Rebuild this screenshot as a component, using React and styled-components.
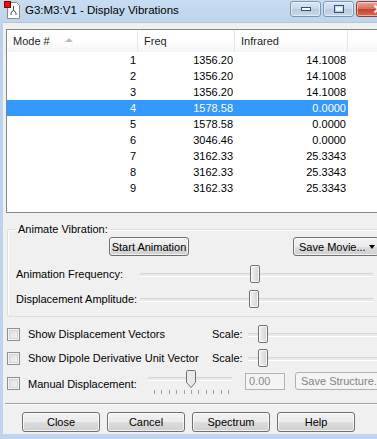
import styled, { createGlobalStyle } from 'styled-components'

const GlobalStyle = createGlobalStyle`
  html, body {
    margin: 0;
    padding: 0;
    width: 377px;
    height: 439px;
    overflow: hidden;
    background: #bfd5ee;
  }
  body {
    font-family: "Liberation Sans", Arial, sans-serif;
    font-size: 11px;
    color: #000;
  }
`

const Window = styled.div`
  width: 404px;
  height: 439px;
  display: flex;
  flex-direction: column;
  background: linear-gradient(#c8dcf1, #bad2ec 30px, #bfd5ee);
`

const TitleBar = styled.div`
  height: 22px;
  flex-shrink: 0;
  display: flex;
  align-items: flex-start;
  padding-left: 2px;
  box-sizing: border-box;
`

const TitleText = styled.span`
  font-size: 11.5px;
  margin-left: 4px;
  margin-top: 4px;
  color: #000;
`

const CaptionButtons = styled.div`
  margin-left: auto;
  display: flex;
  gap: 2px;
  padding-top: 1px;
  padding-right: 4px;
`

const CaptionButton = styled.div`
  width: ${p => (p.$close ? '44px' : '31px')};
  height: 16px;
  box-sizing: border-box;
  border: 1px solid ${p => (p.$close ? '#8f3f36' : '#7e95b2')};
  border-radius: 3px;
  background: ${p => (p.$close
    ? 'linear-gradient(#e9a99b, #d66f5c 50%, #c6402a 51%, #d76a52)'
    : 'linear-gradient(#dbe6f3, #c7d7ea 50%, #b7cae2 51%, #c6d8ed)')};
  display: flex;
  align-items: center;
  justify-content: center;
  box-shadow: inset 0 0 0 1px rgba(255,255,255,0.5);
`

const Body = styled.div`
  flex: 1;
  margin: 0 0 5px 3px;
  background: #f0f0f0;
  border-top: 1px solid #b3c6db;
  padding: 6px 0 0 3px;
  display: flex;
  flex-direction: column;
  overflow: hidden;
  & > * {
    flex-shrink: 0;
  }
`

const ListView = styled.div`
  height: 184px;
  box-sizing: border-box;
  border: 1px solid #828790;
  background: #fff;
  overflow: hidden;
`

const columns = '131px 97px 113px 1fr'

const HeaderRow = styled.div`
  display: grid;
  grid-template-columns: ${columns};
  height: 22px;
  background: linear-gradient(#ffffff, #ffffff 50%, #f4f5f7);
`

const HeaderCell = styled.div`
  display: flex;
  align-items: center;
  gap: 15px;
  padding-left: 6px;
  border-right: 1px solid #e3e7ec;
  color: #1e1e1e;
`

const SortArrow = styled.span`
  width: 0;
  height: 0;
  border-left: 4px solid transparent;
  border-right: 4px solid transparent;
  border-bottom: 4px solid #b5bcc5;
  margin-top: -2px;
`

const Row = styled.div`
  display: grid;
  grid-template-columns: ${columns};
  height: 16px;
  line-height: 16px;
`

const Cell = styled.div`
  text-align: right;
  padding-right: 2px;
  background: ${p => (p.$selected ? '#3399ff' : 'transparent')};
  color: ${p => (p.$selected ? '#fff' : '#000')};
`

const GroupBox = styled.fieldset`
  margin: 9px 0 0 1px;
  width: 376px;
  padding: 0 8px 5px 8px;
  border: 1px solid #d5dfe5;
  border-radius: 3px;
  box-shadow: inset 1px 1px 0 #fff;
  box-sizing: border-box;
`

const Legend = styled.legend`
  padding: 0 2px;
  margin-left: 0;
  line-height: 14px;
`

const GroupTop = styled.div`
  display: flex;
  margin-top: 1px;
  padding-left: 93px;
`

const PushButton = styled.div`
  width: ${p => p.$w}px;
  height: ${p => p.$h || 19}px;
  margin-left: ${p => p.$ml || 0}px;
  box-sizing: border-box;
  border: 1px solid ${p => (p.$disabled ? '#adb2b5' : '#707070')};
  border-radius: 3px;
  background: ${p => (p.$disabled
    ? '#f4f4f4'
    : 'linear-gradient(#f2f2f2, #ebebeb 50%, #dddddd 51%, #cfcfcf)')};
  box-shadow: ${p => (p.$disabled ? 'none' : 'inset 0 0 0 1px rgba(255,255,255,0.7)')};
  color: ${p => (p.$disabled ? '#838383' : '#000')};
  display: flex;
  align-items: center;
  justify-content: ${p => (p.$left ? 'flex-start' : 'center')};
  padding-left: ${p => (p.$left ? '5px' : '0')};
  gap: 3px;
  white-space: nowrap;
  flex-shrink: 0;
`

const DropArrow = styled.span`
  width: 0;
  height: 0;
  border-left: 3px solid transparent;
  border-right: 3px solid transparent;
  border-top: 4px solid #000;
`

const SliderRow = styled.div`
  display: grid;
  grid-template-columns: 124px 233px;
  align-items: center;
  height: 25px;
  margin-top: ${p => p.$mt || 0}px;
`

const Track = styled.div`
  position: relative;
  height: 18px;
  &::before {
    content: '';
    position: absolute;
    left: 0;
    right: 0;
    top: 8px;
    height: 2px;
    background: #e7eaea;
    border-top: 1px solid #d6d6d6;
    border-bottom: 1px solid #ffffff;
  }
`

const Thumb = styled.div`
  position: absolute;
  top: 0;
  width: 10px;
  height: 18px;
  box-sizing: border-box;
  border: 1px solid #707070;
  border-radius: 2px;
  background: linear-gradient(90deg, #f2f2f2, #e2e2e2 50%, #d2d2d2);
  box-shadow: inset 0 0 0 1px rgba(255,255,255,0.8);
`

const Slider = ({ pos }) => (
  <Track>
    <Thumb style={{ left: pos }} />
  </Track>
)

const OptionRow = styled.div`
  display: grid;
  grid-template-columns: 21px 184px 36px 1fr;
  align-items: center;
  height: 18px;
  margin-top: ${p => p.$mt || 0}px;
  padding-left: 1px;
`

const CheckBox = styled.div`
  width: 13px;
  height: 13px;
  box-sizing: border-box;
  border: 1px solid #8e8f8f;
  background: linear-gradient(135deg, #dcdcdc, #f4f4f4);
  box-shadow: inset 0 0 0 1px #f4f4f4, inset 0 0 0 2px #d4d4d4;
`

const Label = styled.span`
  white-space: nowrap;
`

const ManualRow = styled.div`
  display: flex;
  align-items: flex-start;
  height: 26px;
  margin-top: 8px;
  padding-left: 1px;
`

const ManualLabel = styled.div`
  display: flex;
  align-items: center;
  width: 141px;
  height: 17px;
  gap: 8px;
`

const TickSlider = styled.div`
  position: relative;
  width: 84px;
  height: 24px;
  margin-top: -5px;
  &::before {
    content: '';
    position: absolute;
    left: 0;
    right: 0;
    top: 7px;
    height: 2px;
    background: #e7eaea;
    border-top: 1px solid #d6d6d6;
    border-bottom: 1px solid #ffffff;
  }
`

const Ticks = styled.div`
  position: absolute;
  left: 6px;
  right: 3px;
  top: 20px;
  display: flex;
  justify-content: space-between;
`

const Tick = styled.span`
  width: 1px;
  height: 4px;
  background: #a0a0a0;
`

const PointerThumb = styled.svg`
  position: absolute;
  top: 0;
`

const TextBox = styled.div`
  width: 40px;
  height: 17px;
  box-sizing: border-box;
  margin-left: 13px;
  margin-top: -2px;
  border: 1px solid #b3b3b3;
  background: #f4f4f4;
  color: #8a8a8a;
  padding-left: 3px;
  line-height: 15px;
`

const Separator = styled.div`
  margin: 2px 0 0 -1px;
  height: 0;
  border-top: 1px solid #a0a0a0;
  border-bottom: 1px solid #ffffff;
`

const Footer = styled.div`
  display: flex;
  gap: 7px;
  padding: 7px 0 0 16px;
`

const TitleIcon = () => (
  <svg width="19" height="20" viewBox="0 0 19 20">
    <path d="M5.5 2.5h9l3 3v13h-12z" fill="#fff" stroke="#8a8a8a" />
    <path d="M11.5 6v4M11.5 10l-2.5 3M11.5 10l2.5 3M9 13v2M14 13v2" stroke="#505050" strokeWidth="1" fill="none" />
    <rect x="2.5" y="1.5" width="6" height="6" fill="#e01010" stroke="#900000" />
  </svg>
)

const vibrations = [
  [1, '1356.20', '14.1008'],
  [2, '1356.20', '14.1008'],
  [3, '1356.20', '14.1008'],
  [4, '1578.58', '0.0000'],
  [5, '1578.58', '0.0000'],
  [6, '3046.46', '0.0000'],
  [7, '3162.33', '25.3343'],
  [8, '3162.33', '25.3343'],
  [9, '3162.33', '25.3343'],
]

const App = () => {
  const selected = 4
  return (
    <>
      <GlobalStyle />
      <Window>
        <TitleBar>
          <TitleIcon />
          <TitleText>G3:M3:V1 - Display Vibrations</TitleText>
          <CaptionButtons>
            <CaptionButton>
              <svg width="10" height="4"><rect x="0.5" y="0.5" width="9" height="3" fill="#fff" stroke="#36506f" /></svg>
            </CaptionButton>
            <CaptionButton>
              <svg width="10" height="8"><rect x="0.5" y="0.5" width="9" height="7" fill="none" stroke="#36506f" /><rect x="2" y="2.5" width="6" height="3" fill="#fff" /></svg>
            </CaptionButton>
            <CaptionButton $close>
              <svg width="11" height="10"><path d="M1.5 1.5l8 7M9.5 1.5l-8 7" stroke="#fff" strokeWidth="2.2" /></svg>
            </CaptionButton>
          </CaptionButtons>
        </TitleBar>

        <Body>
          <ListView>
            <HeaderRow>
              <HeaderCell>Mode # <SortArrow /></HeaderCell>
              <HeaderCell>Freq</HeaderCell>
              <HeaderCell>Infrared</HeaderCell>
              <HeaderCell />
            </HeaderRow>
            {vibrations.map(([mode, freq, ir]) => (
              <Row key={mode}>
                <Cell $selected={mode === selected}>{mode}</Cell>
                <Cell $selected={mode === selected}>{freq}</Cell>
                <Cell $selected={mode === selected}>{ir}</Cell>
                <Cell />
              </Row>
            ))}
          </ListView>

          <GroupBox>
            <Legend>Animate Vibration:</Legend>
            <GroupTop>
              <PushButton $w={80}>Start Animation</PushButton>
              <PushButton $w={86} $ml={104} $left>Save Movie... <DropArrow /></PushButton>
            </GroupTop>
            <SliderRow $mt={5}>
              <Label>Animation Frequency:</Label>
              <Slider pos={110} />
            </SliderRow>
            <SliderRow>
              <Label>Displacement Amplitude:</Label>
              <Slider pos={109} />
            </SliderRow>
          </GroupBox>

          <OptionRow $mt={8}>
            <CheckBox />
            <Label>Show Displacement Vectors</Label>
            <Label>Scale:</Label>
            <Slider pos={10} />
          </OptionRow>
          <OptionRow $mt={6}>
            <CheckBox />
            <Label>Show Dipole Derivative Unit Vector</Label>
            <Label>Scale:</Label>
            <Slider pos={10} />
          </OptionRow>

          <ManualRow>
            <ManualLabel>
              <CheckBox />
              <Label>Manual Displacement:</Label>
            </ManualLabel>
            <TickSlider>
              <PointerThumb width="10" height="18" style={{ left: 38 }}>
                <path d="M0.5 1.5a1 1 0 0 1 1-1h7a1 1 0 0 1 1 1v11l-4.5 5l-4.5-5z" fill="#e9e9e9" stroke="#707070" />
              </PointerThumb>
              <Ticks>
                {Array.from({ length: 11 }).map((_, i) => <Tick key={i} />)}
              </Ticks>
            </TickSlider>
            <TextBox>0.00</TextBox>
            <PushButton $w={86} $h={18} $ml={10} $disabled $left style={{ marginTop: -3 }}>Save Structure...</PushButton>
          </ManualRow>

          <Separator />

          <Footer>
            <PushButton $w={78} $h={20}>Close</PushButton>
            <PushButton $w={78} $h={20}>Cancel</PushButton>
            <PushButton $w={78} $h={20}>Spectrum</PushButton>
            <PushButton $w={78} $h={20}>Help</PushButton>
          </Footer>
        </Body>
      </Window>
    </>
  )
}

export default App
